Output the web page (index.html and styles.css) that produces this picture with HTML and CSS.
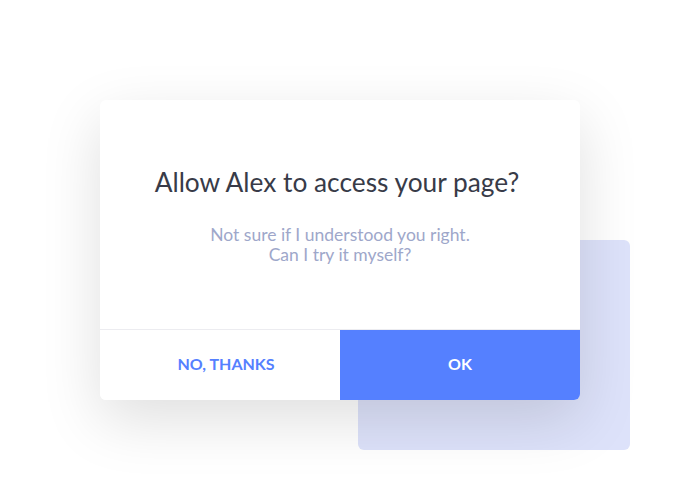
FILE: index.html
```html
<!DOCTYPE html>
<html lang="en">
<head>
  <meta charset="UTF-8" />
  <meta name="viewport" content="width=device-width, initial-scale=1.0" />
  <title>Allow access</title>
  <link rel="stylesheet" href="styles.css">
</head>
<body>

  <div class="stage">
    <div class="dialog-wrap">
      <div class="back-card"></div>

      <div class="dialog">
        <div class="dialog-body">
          <h2>Allow Alex to access your page?</h2>
          <p>Not sure if I understood you right.<br>Can I try it myself?</p>
        </div>
        <div class="dialog-actions">
          <button class="btn-cancel">NO, THANKS</button>
          <button class="btn-ok">OK</button>
        </div>
      </div>
    </div>
  </div>

</body>
</html>
```

FILE: styles.css
```css
body {
  margin: 0;
  font-family: Lato, 'Noto Sans', sans-serif;
  background: #fff;
}

.stage {
  width: 680px;
  height: 500px;
  padding: 100px 0 0 100px;
  box-sizing: border-box;
}

.dialog-wrap {
  position: relative;
  width: 480px;
}

/* decorative card behind the dialog */
.back-card {
  position: absolute;
  left: 258px;
  top: 140px;
  width: 272px;
  height: 210px;
  border-radius: 6px;
  background: #dde2fa;
}

.dialog {
  position: relative;
  background: #fff;
  border-radius: 6px;
  overflow: hidden;
  box-shadow: 0 20px 60px rgba(0, 0, 0, 0.13);
}

.dialog-body {
  height: 230px;
  box-sizing: border-box;
  padding-top: 66px;
  text-align: center;
  border-bottom: 1px solid #ececf0;
}

.dialog-body h2 {
  margin: 0 6px 0 0;
  font-size: 26.3px;
  font-weight: 400;
  line-height: 32px;
  color: #383b48;
}

.dialog-body p {
  margin: 27px 0 0;
  font-size: 17.5px;
  line-height: 20px;
  color: #9ea7ca;
}

.dialog-actions {
  display: flex;
  height: 70px;
}

.dialog-actions button {
  flex: 0 0 50%;
  box-sizing: border-box;
  border: none;
  padding: 0 0 3px;
  font-family: inherit;
  font-size: 16px;
  font-weight: 700;
  cursor: pointer;
}

.dialog-actions .btn-cancel {
  padding-left: 12px;
  background: #fff;
  color: #5580ff;
}

.dialog-actions .btn-ok {
  background: #5580ff;
  color: #fff;
}
```
